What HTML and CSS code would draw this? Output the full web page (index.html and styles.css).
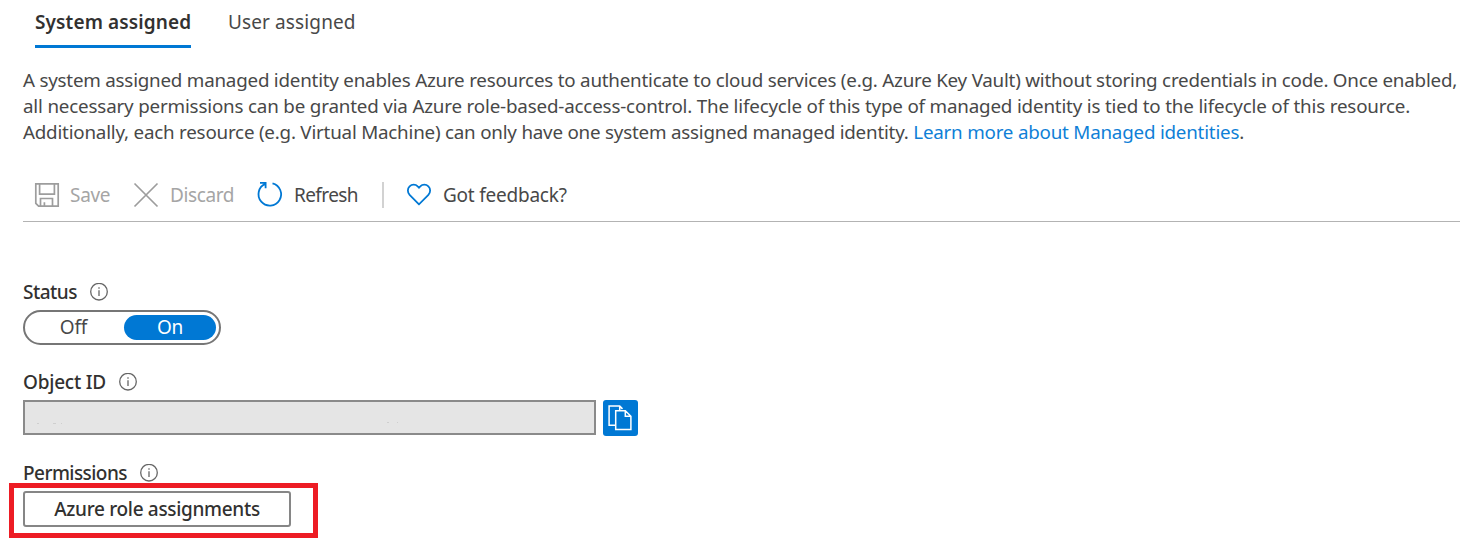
FILE: index.html
```html
<!DOCTYPE html>
<html lang="en">
<head>
<meta charset="utf-8">
<title>Managed identity</title>
<link rel="stylesheet" href="styles.css">
</head>
<body>
<main class="page">
  <nav class="tabs">
    <a class="tab tab-active">System assigned</a>
    <a class="tab">User assigned</a>
  </nav>

  <p class="intro">
    <span class="line line-1">A system assigned managed identity enables Azure resources to authenticate to cloud services (e.g. Azure Key Vault) without storing credentials in code. Once enabled,</span>
    <span class="line line-2">all necessary permissions can be granted via Azure role-based-access-control. The lifecycle of this type of managed identity is tied to the lifecycle of this resource.</span>
    <span class="line line-3">Additionally, each resource (e.g. Virtual Machine) can only have one system assigned managed identity. <a class="link">Learn more about Managed identities</a>.</span>
  </p>

  <div class="toolbar">
    <div class="command command-save disabled">
      <svg class="icon" width="24" height="24" viewBox="0 0 24 24"><path d="M.8.8H23.2V23.2H3.600L.8 20.400ZM4.600.8V11.200H19.400V.8M5.500 23V15.500H17.500V23M9.400 23V19.200"/></svg>
      <span>Save</span>
    </div>
    <div class="command command-discard disabled">
      <svg class="icon" width="24" height="24" viewBox="0 0 24 24"><path d="M.5.5L23.500 23.500M23.500.5L.5 23.500"/></svg>
      <span>Discard</span>
    </div>
    <div class="command command-refresh">
      <svg class="icon blue" width="26" height="26" viewBox="0 0 26 26"><path d="M16.500 1.300A11.300 11.300 0 1 1 9.300 1.900M4 .9H9.600V6.300"/></svg>
      <span>Refresh</span>
    </div>
    <div class="divider"></div>
    <div class="command command-feedback">
      <svg class="icon blue" width="24" height="22" viewBox="0 0 24 22"><path d="M12 20.300L2.600 10.900C.3 8.500 .3 4.700 2.600 2.400C4.900.1 8.500.1 10.700 2.400L12 3.700L13.300 2.400C15.500.1 19.100.1 21.400 2.400C23.700 4.700 23.700 8.500 21.400 10.900Z"/></svg>
      <span>Got feedback?</span>
    </div>
  </div>

  <section class="field field-status">
    <div class="label"><span>Status</span>
      <svg class="info" width="18" height="18" viewBox="0 0 18 18"><circle cx="9" cy="8.700" r="8.300"/><path d="M9 7.200V13M9 4.200V5.700"/></svg>
    </div>
    <div class="toggle"><span class="option">Off</span><span class="option option-on">On</span></div>
  </section>

  <section class="field field-object">
    <div class="label"><span>Object ID</span>
      <svg class="info" width="18" height="18" viewBox="0 0 18 18"><circle cx="9" cy="8.700" r="8.300"/><path d="M9 7.200V13M9 4.200V5.700"/></svg>
    </div>
    <div class="id-row">
      <div class="id-box"><svg width="569" height="31" viewBox="0 0 569 31"><path class="specks" d="M12 21.500h2M28 21.500h3M36 21.500h1M362 20.500h2M372 20.500h1"/></svg></div>
      <button class="copy" aria-label="Copy">
        <svg width="24" height="26" viewBox="0 0 24 26"><path d="M7.500 20.200H1.100V1.100H11.700L14.500 3.900M7.700 5.700H17.300L22.900 11.300V24.600H7.700ZM17.300 5.700V11.300H22.900M11.700 1.100V5.500"/></svg>
      </button>
    </div>
  </section>

  <section class="field field-permissions">
    <div class="label"><span>Permissions</span>
      <svg class="info" width="18" height="18" viewBox="0 0 18 18"><circle cx="9" cy="8.700" r="8.300"/><path d="M9 7.200V13M9 4.200V5.700"/></svg>
    </div>
    <div class="highlight">
      <button class="assignments">Azure role assignments</button>
    </div>
  </section>
</main>
</body>
</html>
```
FILE: styles.css
```css
* { box-sizing: border-box; }

body {
  margin: 0;
  background: #fff;
  color: #484848;
  font: 19px/26px "Noto Sans", "Open Sans", sans-serif;
  overflow: hidden;
}

.page {
  width: 1473px;
  height: 544px;
  padding: 0 13px 0 23px;
}

span, .link { white-space: nowrap; }

.tabs {
  display: flex;
  gap: 37px;
  height: 48px;
  padding: 9px 0 0 12px;
}

.tab { display: block; height: 39px; letter-spacing: 0.12px; white-space: nowrap; }

.tab-active {
  width: 156px;
  border-bottom: 3px solid #0078d4;
  color: #323130;
  font-weight: 600;
}

.intro { margin: 19px 0 0; font-size: 18.8px; }
.line { display: block; }
.line-1 { letter-spacing: -0.222px; }
.line-2 { letter-spacing: -0.178px; }
.line-3 { letter-spacing: -0.215px; }
.link { color: #0f7fd7; }

.toolbar {
  display: flex;
  align-items: center;
  height: 77px;
  padding: 24px 0 0 12px;
  border-bottom: 1px solid #b3b3b3;
}

.command { display: flex; align-items: center; gap: 11px; }
.command-save { width: 99px; letter-spacing: -0.3px; }
.command-discard { width: 122px; gap: 12px; letter-spacing: -0.4px; }
.command-refresh { width: 126px; gap: 12px; letter-spacing: -0.6px; }
.command-feedback { gap: 12px; margin-left: 23px; letter-spacing: -0.23px; }
.disabled { color: #a5a5a5; }

.icon {
  flex: none;
  overflow: visible;
  fill: none;
  stroke: #9d9d9d;
  stroke-width: 1.7;
}

.icon.blue { stroke: #0078d4; stroke-width: 1.8; }

.divider { width: 2px; height: 26px; background: #d2d2d2; }

.label {
  display: flex;
  align-items: center;
  gap: 13px;
  height: 26px;
  color: #323130;
  font-weight: 500;
}

.info { flex: none; fill: none; stroke: #666; stroke-width: 1.3; }

.field-status { margin-top: 57px; }
.field-object { margin-top: 24px; }
.field-permissions { margin-top: 24px; }
.field-status .label { letter-spacing: -0.5px; }
.field-object .label { letter-spacing: -0.22px; }
.field-permissions .label { letter-spacing: -0.55px; }

.toggle {
  display: flex;
  width: 198px;
  height: 35px;
  margin-top: 5px;
  padding: 3px;
  border: 2px solid #767676;
  border-radius: 18px;
}

.option {
  flex: 1;
  height: 25px;
  padding-right: 5px;
  border-radius: 13px;
  letter-spacing: -0.2px;
  line-height: 25px;
  text-align: center;
}

.option-on {
  flex: none;
  width: 92px;
  padding: 0;
  background: #0078d4;
  color: #fff;
}

.id-row { display: flex; gap: 7px; margin-top: 5px; }

.id-box {
  width: 573px;
  height: 35px;
  border: 2px solid #8a8a8a;
  background: #e5e5e5;
}

.id-box svg { display: block; }
.specks { stroke: #cfcfcf; stroke-width: 1; }

.copy {
  display: flex;
  width: 35px;
  height: 36px;
  padding: 5px 0 0 5px;
  border: 0;
  border-radius: 3px;
  background: #0078d4;
}

.copy svg { flex: none; fill: none; stroke: #fff; stroke-width: 1.5; }

.highlight {
  width: 309px;
  height: 55px;
  margin: -3px 0 0 -14px;
  padding: 3px 0 0 9px;
  border: 5px solid #ed1c24;
}

.assignments {
  display: block;
  width: 268px;
  height: 36px;
  padding: 0;
  border: 2px solid #868686;
  border-radius: 3px;
  background: #fff;
  color: #323130;
  font: inherit;
  font-weight: 500;
  letter-spacing: -0.32px;
}
```
